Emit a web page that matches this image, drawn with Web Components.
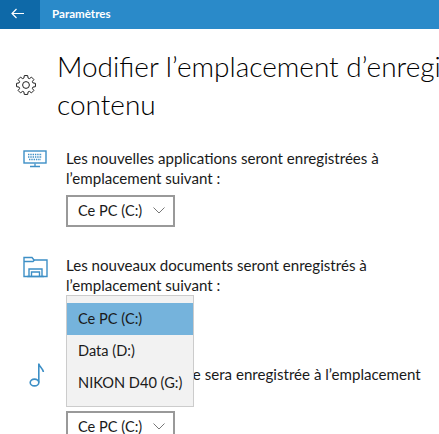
<!DOCTYPE html>
<html lang="fr">
<head>
<meta charset="utf-8">
<title>Paramètres</title>
<style>
  html, body { margin: 0; height: 100%; overflow: hidden; background: #fff; }
  body { font-family: Lato, "Open Sans", sans-serif; color: #1a1a1a; }
  storage-row:nth-of-type(1) { --row-height: 107px; }
  storage-row:nth-of-type(2) { --row-height: 109px; --control-gap: 8px; }
  .folder { margin-top: -1px; }
  .note { margin: -4px 0 0 3px; }
</style>
</head>
<body>
<settings-page>
  <settings-header slot="header">Paramètres</settings-header>
  <gear-icon slot="icon"></gear-icon>
  <storage-row>
    <svg slot="icon" width="24" height="18" viewBox="0 0 24 18" fill="none" stroke="#3d8fc6">
      <rect x="1" y="1" width="22" height="12" stroke-width="1.4"/>
      <path d="M12 13.500v2.500M7 16.500h10" stroke-width="1.3"/>
      <path d="M5 4.500h14M5 7h14M6 9.500h12" stroke-width="1.3" stroke-dasharray="1.4 .9"/>
    </svg>
    Les nouvelles applications seront enregistrées à<br>l’emplacement suivant :
    <drive-select slot="control" value="Ce PC (C:)"></drive-select>
  </storage-row>
  <storage-row>
    <svg class="folder" slot="icon" width="25" height="22" viewBox="0 0 25 22" fill="none" stroke="#3d8fc6" stroke-width="1.4">
      <path d="M1 20.500V1.500h8l2 2.500h13v16.500z"/>
      <path d="M1 5.500h9l1.500-1.500"/>
      <path d="M6 20.500v-7.500h13v7.500M8.500 20.500v-4.500h8v4.500"/>
      <path d="M4 20.500h17"/>
    </svg>
    Les nouveaux documents seront enregistrés à<br>l’emplacement suivant :
    <drive-select slot="control" value="Ce PC (C:)" open></drive-select>
  </storage-row>
  <storage-row>
    <svg class="note" slot="icon" width="16" height="26" viewBox="0 0 16 26" fill="none" stroke="#3d8fc6" stroke-width="1.6">
      <ellipse cx="5.500" cy="20.500" rx="4.300" ry="3.400"/>
      <path d="M9.800 20.500V1.500c.3 3 4 4.500 4.600 8.500"/>
    </svg>
    La nouvelle musique sera enregistrée à l’emplacement<br>suivant :
    <drive-select slot="control" value="Ce PC (C:)"></drive-select>
  </storage-row>
</settings-page>
<script>
// Elements
const DRIVES = ["Ce PC (C:)", "Data (D:)", "NIKON D40 (G:)"];

// 8 tooth outline, centred on 10,10
const GearPath = (outer = 9.6, inner = 7.2) => {
  const pts = [];
  for (let k = 0; k < 8; k++) {
    const a = k * 45;
    [[-17, inner], [-10, outer], [10, outer], [17, inner]].forEach(([d, r]) => {
      const t = (a + d) * Math.PI / 180;
      pts.push((10 + r * Math.cos(t)).toFixed(2) + " " + (10 + r * Math.sin(t)).toFixed(2));
    });
  }
  return "M" + pts.join("L") + "z";
};

class GearIcon extends HTMLElement {
  constructor() {
    super();
    this.attachShadow({ mode: "open" }).innerHTML = `
<style>:host { display: block; width: 20px; height: 20px; } svg { display: block; }</style>
<svg width="20" height="20" viewBox="0 0 20 20" fill="none" stroke="#222" stroke-width="1">
  <circle cx="10" cy="10" r="3.400"/>
  <path d="${GearPath()}" stroke-linejoin="round"/>
</svg>`;
  }
}

class SettingsHeader extends HTMLElement {
  constructor() {
    super();
    this.attachShadow({ mode: "open" }).innerHTML = `
<style>
  :host { display: flex; height: 29px; background: #2a8ac9; color: #fff; font-size: 11.6px; font-weight: 700; }
  .back { width: 40px; flex: none; display: flex; align-items: center; justify-content: center; padding: 0 5px 3px 0; box-sizing: border-box; background: #0e69a8; }
  .label { display: flex; align-items: center; padding-left: 12px; padding-bottom: 3px; }
</style>
<div class="back">
  <svg width="13" height="11" viewBox="0 0 13 11" fill="none" stroke="#fff" stroke-width="1.2"><path d="M13 5.500H1M5.500 1 1 5.500 5.500 10"/></svg>
</div>
<div class="label"><slot></slot></div>`;
  }
}

class SettingsPage extends HTMLElement {
  constructor() {
    super();
    this.attachShadow({ mode: "open" }).innerHTML = `
<style>
  :host { display: block; height: 434px; overflow: hidden; }
  .head { display: grid; grid-template-columns: 57px 1fr; align-items: center; box-sizing: border-box; padding-top: 7px; height: 119px; padding-bottom: 15px; }
  .icon { display: flex; justify-content: flex-end; padding-right: 21px; }
  h1 { margin: 0; font-size: 28px; font-weight: 300; line-height: 38px; white-space: nowrap; color: #000; }
  .rows { display: flex; flex-direction: column; }
</style>
<slot name="header"></slot>
<div class="head">
  <div class="icon"><slot name="icon"></slot></div>
  <h1>Modifier l’emplacement d’enregi<br>contenu</h1>
</div>
<div class="rows"><slot></slot></div>`;
  }
}

class StorageRow extends HTMLElement {
  constructor() {
    super();
    this.attachShadow({ mode: "open" }).innerHTML = `
<style>
  :host { display: grid; grid-template-columns: 66px 1fr; flex: none; height: var(--row-height, 108px); font-size: 15.1px; line-height: 20px; color: #1a1a1a; }
  .icon { display: flex; justify-content: center; padding: 2px 0 0 4px; box-sizing: border-box; align-items: flex-start; }
  .text { white-space: nowrap; }
  .control { margin-top: var(--control-gap, 7px); }
</style>
<div class="icon"><slot name="icon"></slot></div>
<div>
  <div class="text"><slot></slot></div>
  <div class="control"><slot name="control"></slot></div>
</div>`;
  }
}

class DriveSelect extends HTMLElement {
  constructor() {
    super();
    this.attachShadow({ mode: "open" });
  }
  connectedCallback() {
    const value = this.getAttribute("value");
    const items = DRIVES.map(d => `<div class="item${d === value ? " on" : ""}">${d}</div>`).join("");
    this.shadowRoot.innerHTML = `
<style>
  :host { display: block; position: relative; width: 109px; height: 32px; font-size: 14.6px; color: #1a1a1a; }
  .box { box-sizing: border-box; height: 32px; border: 2px solid #999; display: flex; align-items: center; justify-content: space-between; padding: 0 8px 1px 10px; white-space: nowrap; }
  .menu { position: absolute; z-index: 2; left: 0; top: -8px; width: 128px; box-sizing: border-box; padding: 7px 0; background: #f2f2f2; border: 1px solid #ccc; white-space: nowrap; }
  .item { height: 32px; line-height: 32px; padding-left: 11px; }
  .item.on { background: #75b3dc; }
</style>
<div class="box"><span>${value}</span>
  <svg width="12" height="7" viewBox="0 0 12 7" fill="none" stroke="#777"><path d="M.5.5 6 6 11.500.5"/></svg>
</div>
${this.hasAttribute("open") ? `<div class="menu">${items}</div>` : ""}`;
  }
}

customElements.define("gear-icon", GearIcon);
customElements.define("settings-header", SettingsHeader);
customElements.define("settings-page", SettingsPage);
customElements.define("storage-row", StorageRow);
customElements.define("drive-select", DriveSelect);
</script>
</body>
</html>
